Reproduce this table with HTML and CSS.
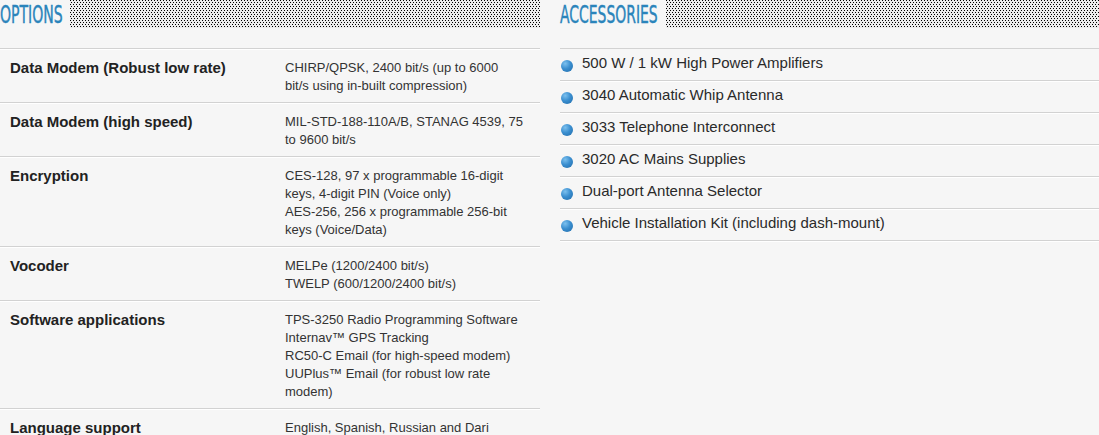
FILE: index.html
```html
<!DOCTYPE html>
<html>
<head>
<meta charset="utf-8">
<link rel="stylesheet" href="styles.css">
</head>
<body>
<div class="page">
  <section class="col col-left">
    <div class="head"><div class="title"><span>OPTIONS</span></div><div class="dots"></div></div>
    <div class="table">
      <div class="row"><div class="label">Data Modem (Robust low rate)</div><div class="value">CHIRP/QPSK, 2400 bit/s (up to 6000 bit/s using in-built compression)</div></div>
      <div class="row"><div class="label">Data Modem (high speed)</div><div class="value">MIL-STD-188-110A/B, STANAG 4539, 75 to 9600 bit/s</div></div>
      <div class="row"><div class="label">Encryption</div><div class="value">CES-128, 97 x programmable 16-digit keys, 4-digit PIN (Voice only)<br>AES-256, 256 x programmable 256-bit keys (Voice/Data)</div></div>
      <div class="row"><div class="label">Vocoder</div><div class="value">MELPe (1200/2400 bit/s)<br>TWELP (600/1200/2400 bit/s)</div></div>
      <div class="row"><div class="label">Software applications</div><div class="value">TPS-3250 Radio Programming Software<br>Internav™ GPS Tracking<br>RC50-C Email (for high-speed modem)<br>UUPlus™ Email (for robust low rate modem)</div></div>
      <div class="row"><div class="label">Language support</div><div class="value">English, Spanish, Russian and Dari</div></div>
    </div>
  </section>
  <section class="col col-right">
    <div class="head"><div class="title title-acc"><span>ACCESSORIES</span></div><div class="dots"></div></div>
    <ul class="list">
      <li><i class="bullet"></i>500 W / 1 kW High Power Amplifiers</li>
      <li><i class="bullet"></i>3040 Automatic Whip Antenna</li>
      <li><i class="bullet"></i>3033 Telephone Interconnect</li>
      <li><i class="bullet"></i>3020 AC Mains Supplies</li>
      <li><i class="bullet"></i>Dual-port Antenna Selector</li>
      <li><i class="bullet"></i>Vehicle Installation Kit (including dash-mount)</li>
    </ul>
  </section>
</div>
</body>
</html>
```
FILE: styles.css
```css
html, body {
  margin: 0;
  padding: 0;
  background: #f6f6f6;
}
body {
  font-family: "Liberation Sans", Arial, sans-serif;
  color: #222;
  overflow: hidden;
}
.page {
  display: flex;
  gap: 20px;
  width: 1120px;
}
.col-left {
  width: 540px;
  flex: none;
}
.col-right {
  width: 560px;
  flex: none;
}
.head {
  display: flex;
  height: 28px;
  margin-bottom: 20px;
}
.title {
  width: 63px;
  flex: none;
  position: relative;
  color: #2a84bb;
  font-family: "DejaVu Sans Condensed", "Liberation Sans Narrow", sans-serif;
  font-size: 25px;
  line-height: 30px;
  white-space: nowrap;
}
.title span {
  display: inline-block;
  transform: scaleX(0.625);
  transform-origin: 0 0;
  margin-top: -1px;
  -webkit-text-stroke: 0.4px #2a84bb;
}
.title-acc {
  width: 100px;
}
.title-acc span {
  transform: scaleX(0.62);
}
.dots {
  flex: 1;
  margin-left: 7px;
  background:
    conic-gradient(from 270deg at 1px 1px, #000 90deg, transparent 0) 0 0 / 3px 4px,
    conic-gradient(from 270deg at 1px 1px, #000 90deg, transparent 0) 1px 2px / 3px 4px,
    #ececec;
}
.col-right .dots {
  margin-left: 6px;
}
.table {
  border-top: 1px solid #d2d2d2;
  box-shadow: inset 0 1px 0 #fff;
}
.row {
  display: flex;
  padding: 10px 0 7px;
  border-bottom: 1px solid #d2d2d2;
  box-shadow: 0 1px 0 #fff;
}
.label {
  width: 285px;
  flex: none;
  padding-left: 10px;
  box-sizing: border-box;
  font-size: 15px;
  font-weight: bold;
  line-height: 18px;
  color: #222;
}
.value {
  width: 238px;
  font-size: 13px;
  line-height: 18px;
  color: #333;
}
.list {
  list-style: none;
  margin: 0;
  padding: 0;
  border-top: 1px solid #d2d2d2;
}
.list li {
  display: flex;
  align-items: flex-start;
  padding: 5px 0 8px;
  border-bottom: 1px solid #d2d2d2;
  box-shadow: 0 1px 0 #fff;
  font-size: 15px;
  line-height: 18px;
  color: #2a2a2a;
}
.bullet {
  width: 12px;
  height: 12px;
  border-radius: 50%;
  margin: 6px 9px 0 1px;
  flex: none;
  background: radial-gradient(circle at 35% 30%, #7cc0ee 0, #3b8fd0 45%, #1f6aa8 100%);
}
```
